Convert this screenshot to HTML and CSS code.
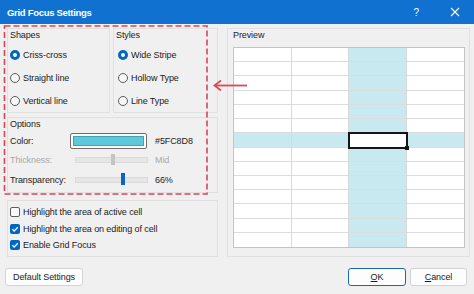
FILE: index.html
```html
<!DOCTYPE html>
<html lang="en">
<head>
  <meta charset="UTF-8">
  <title>Grid Focus Settings</title>
  <link rel="stylesheet" href="styles.css">
</head>
<body>
  <div class="dialog">
    <div class="titlebar">
      <span class="title">Grid Focus Settings</span>
      <span class="help">?</span>
      <svg class="close" width="10" height="10" viewBox="0 0 10 10"><path d="M1 1 L9 9 M9 1 L1 9" stroke="#fff" stroke-width="1.1"/></svg>
    </div>

    <div class="content">
      <div class="left">
        <div class="top-groups">
          <div class="group shapes">
            <div class="legend">Shapes</div>
            <div class="radio-list">
              <div class="radio checked"><span class="dot"></span>Criss-cross</div>
              <div class="radio"><span class="dot"></span>Straight line</div>
              <div class="radio"><span class="dot"></span>Vertical line</div>
            </div>
          </div>
          <div class="group styles">
            <div class="legend">Styles</div>
            <div class="radio-list">
              <div class="radio checked"><span class="dot"></span>Wide Stripe</div>
              <div class="radio"><span class="dot"></span>Hollow Type</div>
              <div class="radio"><span class="dot"></span>Line Type</div>
            </div>
          </div>
        </div>

        <div class="group options">
          <div class="legend">Options</div>
          <div class="opt-row">
            <span class="opt-label">Color:</span>
            <span class="color-btn"><span class="swatch"></span></span>
            <span class="opt-value">#5FC8D8</span>
          </div>
          <div class="opt-row disabled">
            <span class="opt-label">Thickness:</span>
            <span class="track"><span class="thumb" style="left: 35px"></span></span>
            <span class="opt-value">Mid</span>
          </div>
          <div class="opt-row">
            <span class="opt-label">Transparency:</span>
            <span class="track"><span class="thumb blue" style="left: 45px"></span></span>
            <span class="opt-value">66%</span>
          </div>
        </div>

        <div class="group checks">
          <div class="check"><span class="box"></span>Highlight the area of active cell</div>
          <div class="check checked"><span class="box"><svg width="10" height="10" viewBox="0 0 10 10"><path d="M2.4 5.2 L4.2 7 L7.8 3.2" fill="none" stroke="#fff" stroke-width="1.3"/></svg></span>Highlight the area on editing of cell</div>
          <div class="check checked"><span class="box"><svg width="10" height="10" viewBox="0 0 10 10"><path d="M2.4 5.2 L4.2 7 L7.8 3.2" fill="none" stroke="#fff" stroke-width="1.3"/></svg></span>Enable Grid Focus</div>
        </div>
      </div>

      <div class="group preview">
        <div class="legend">Preview</div>
        <div class="sheet">
          <div class="cell"></div><div class="cell"></div><div class="cell hl"></div><div class="cell"></div>
          <div class="cell"></div><div class="cell"></div><div class="cell hl"></div><div class="cell"></div>
          <div class="cell"></div><div class="cell"></div><div class="cell hl"></div><div class="cell"></div>
          <div class="cell"></div><div class="cell"></div><div class="cell hl"></div><div class="cell"></div>
          <div class="cell"></div><div class="cell"></div><div class="cell hl"></div><div class="cell"></div>
          <div class="cell"></div><div class="cell"></div><div class="cell hl"></div><div class="cell"></div>
          <div class="cell hl"></div><div class="cell hl"></div><div class="cell active"></div><div class="cell hl"></div>
          <div class="cell"></div><div class="cell"></div><div class="cell hl"></div><div class="cell"></div>
          <div class="cell"></div><div class="cell"></div><div class="cell hl"></div><div class="cell"></div>
          <div class="cell"></div><div class="cell"></div><div class="cell hl"></div><div class="cell"></div>
          <div class="cell"></div><div class="cell"></div><div class="cell hl"></div><div class="cell"></div>
          <div class="cell"></div><div class="cell"></div><div class="cell hl"></div><div class="cell"></div>
          <div class="cell"></div><div class="cell"></div><div class="cell hl"></div><div class="cell"></div>
          <div class="cell"></div><div class="cell"></div><div class="cell hl"></div><div class="cell"></div>
        </div>
      </div>
    </div>

    <div class="buttons">
      <button class="btn default-btn">Default Settings</button>
      <span class="spacer"></span>
      <button class="btn ok-btn"><u>O</u>K</button>
      <button class="btn"><u>C</u>ancel</button>
    </div>

    <!-- annotation drawn over the dialog -->
    <svg class="annotation" width="474" height="294" viewBox="0 0 474 294">
      <rect x="4.5" y="26" width="202.5" height="168" fill="none" stroke="#d94459" stroke-width="1.6" stroke-dasharray="6 3"/>
      <path d="M247 85.5 H215" stroke="#dc4a59" stroke-width="1.8"/>
      <path d="M221 80.5 L214.5 85.5 L221 90.5" fill="none" stroke="#dc4a59" stroke-width="1.8"/>
    </svg>
  </div>
</body>
</html>
```

FILE: styles.css
```css
body {
  margin: 0;
  background: #f0f0f0;
  font-family: "Liberation Sans", Arial, sans-serif;
  font-size: 9px;
  letter-spacing: -0.1px;
  color: #1b1b1b;
}

.dialog {
  position: relative;
  width: 474px;
  height: 294px;
  overflow: hidden;
}

.titlebar {
  height: 24px;
  background: #1071d0;
  color: #fff;
  display: flex;
  align-items: center;
  padding-left: 7px;
}

.title {
  font-weight: bold;
  font-size: 9.5px;
  letter-spacing: -0.3px;
  flex: 1;
}

.help {
  font-size: 10px;
  margin-right: 31px;
}

.close {
  margin-right: 14px;
}

.content {
  display: flex;
  gap: 9px;
  padding: 4px 0 0 7px;
  height: 229px;
}

.left {
  width: 211px;
  display: flex;
  flex-direction: column;
}

.group {
  border: 1px solid #e0e0e0;
  box-sizing: border-box;
}

.legend {
  height: 12px;
  line-height: 12px;
  padding-left: 2px;
}

.top-groups {
  display: flex;
  gap: 3px;
  height: 85px;
}

.shapes { width: 103px; }
.styles { width: 105px; }

.radio-list {
  display: flex;
  flex-direction: column;
  padding: 2px 0 0 2px;
}

.styles .radio-list {
  padding-left: 4px;
}

.radio {
  height: 23px;
  display: flex;
  align-items: center;
  gap: 3px;
}

.dot {
  width: 10px;
  height: 10px;
  border-radius: 50%;
  border: 1px solid #5c5c5c;
  background: #f7f7f7;
  box-sizing: border-box;
}

.radio.checked .dot {
  border: 3px solid #0067c0;
  background: #fff;
}

.options {
  margin-top: 4px;
  height: 76px;
}

.opt-row {
  display: flex;
  align-items: center;
  height: 19.5px;
  padding-left: 2px;
}

.options .legend {
  margin-bottom: 1px;
}

.opt-label {
  width: 60px;
}

.opt-value {
  margin-left: 7px;
}

.disabled {
  color: #a9a9a9;
}

.color-btn {
  width: 77px;
  height: 16px;
  box-sizing: border-box;
  border: 1px solid #6e6e6e;
  border-radius: 2px;
  background: #fcfcfc;
  padding: 2px;
  margin-right: 1px;
}

.swatch {
  display: block;
  height: 100%;
  background: #5fc8d8;
  border: 1px solid #3ba6b8;
  box-sizing: border-box;
}

.track {
  position: relative;
  width: 73px;
  height: 6px;
  margin-left: 5px;
  background: #e6e6e6;
  border: 1px solid #dadada;
  box-sizing: border-box;
}

.thumb {
  position: absolute;
  top: -4px;
  width: 4px;
  height: 11px;
  background: #c4c4c4;
}

.thumb.blue {
  top: -5px;
  height: 12px;
  background: #0a66c2;
}

.checks {
  margin-top: 7px;
  height: 57px;
  padding: 3px 0 0 2px;
}

.check {
  height: 16.5px;
  display: flex;
  align-items: center;
  gap: 3px;
}

.box {
  width: 10px;
  height: 10px;
  box-sizing: border-box;
  border: 1px solid #5f5f5f;
  border-radius: 2px;
  background: #fafafa;
  display: flex;
}

.check.checked .box {
  border: none;
  background: #0067c0;
}

.preview {
  width: 243px;
  height: 229px;
  padding-left: 5px;
}

.preview .legend {
  padding-left: 0;
}

.sheet {
  margin-top: 6px;
  width: 232px;
  height: 201px;
  box-sizing: border-box;
  border: 1px solid #c4c4c4;
  background: #fff;
  display: grid;
  grid-template-columns: repeat(4, 1fr);
  grid-template-rows: repeat(14, 1fr);
}

.cell {
  border-right: 1px solid #d8d8d8;
  border-bottom: 1px solid #dcdcdc;
  position: relative;
}

.cell:nth-child(4n) { border-right: none; }
.cell:nth-last-child(-n+4) { border-bottom: none; }

.cell.hl {
  background: #c8e9ef;
}

.cell.active {
  outline: 2px solid #151515;
  outline-offset: -1px;
  z-index: 1;
}

.cell.active::after {
  content: "";
  position: absolute;
  right: -3px;
  bottom: -3px;
  width: 4px;
  height: 4px;
  background: #151515;
}

.buttons {
  display: flex;
  gap: 4px;
  padding: 11px 7px 0 5px;
}

.spacer { flex: 1; }

.btn {
  height: 18px;
  width: 57px;
  font-family: "Liberation Sans", Arial, sans-serif;
  font-size: 9px;
  letter-spacing: -0.1px;
  color: #1b1b1b;
  background: #fdfdfd;
  border: 1px solid #d3d3d3;
  border-radius: 3px;
  padding: 0;
}

.default-btn { width: 78px; }

.ok-btn {
  width: 58px;
  border-color: #1b65b5;
}

.annotation {
  position: absolute;
  left: 0;
  top: 0;
  pointer-events: none;
}
```
